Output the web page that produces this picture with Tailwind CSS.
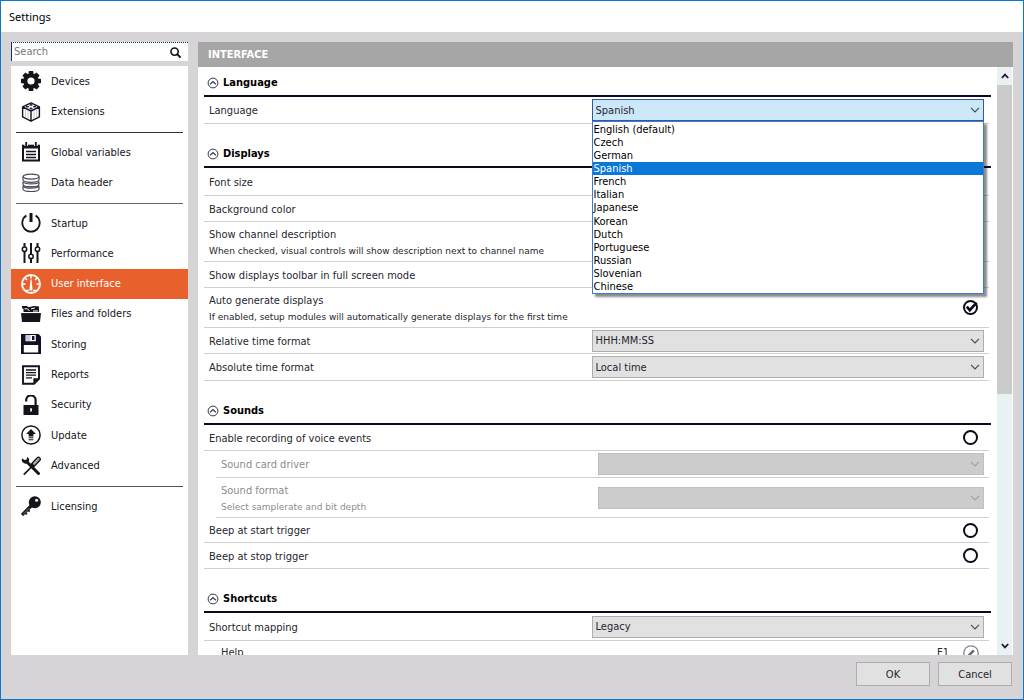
<!DOCTYPE html>
<html lang="en">
<head>
    <meta charset="UTF-8">
    <meta name="viewport" content="width=device-width, initial-scale=1.0">
    <title>Settings</title>
    <script src="https://cdn.jsdelivr.net/npm/@tailwindcss/browser@4"></script>
</head>
<body class="h-screen overflow-hidden flex flex-col border border-[#0a78d0] bg-[#d6d4d7] font-['DejaVu_Sans_Condensed','DejaVu_Sans',sans-serif] text-[11px] leading-[14px] text-[#26262e]">
    <!-- Icons and chevron shared by the page -->
    <svg class="hidden">
        <symbol id="chevron" viewBox="0 0 10 6"><path d="M1 .8l4 4 4-4" fill="none" stroke="currentColor" stroke-width="1.2"/></symbol>
        <symbol id="collapse" viewBox="0 0 12 12"><circle cx="6" cy="6" r="4.9" fill="none" stroke="currentColor"/><path d="M3.2 7.2L6 4.6l2.8 2.6" fill="none" stroke="currentColor" stroke-width="1.3"/></symbol>
    </svg>

    <header class="h-[31px] shrink-0 bg-white flex items-center px-2">
        <h1 class="font-['Noto_Sans',sans-serif] text-[11px] text-black">Settings</h1>
    </header>

    <div class="flex-1 min-h-0 flex gap-2.5 pt-2.5 pl-2.5 pr-2.5">
        <!-- Sidebar -->
        <aside class="w-[177px] shrink-0 flex flex-col gap-[5px]">
            <form class="h-[19px] shrink-0 flex items-center bg-white border-l border-t border-[#1b2a6b] [border-top-style:dotted]">
                <input type="search" aria-label="Search" placeholder="Search" class="flex-1 min-w-0 pl-0.5 outline-none placeholder:text-[#777]">
                <button type="submit" aria-label="Search" class="px-1.5">
                    <svg class="size-[13px]" viewBox="0 0 14 14" fill="none" stroke="#111" stroke-width="1.7"><circle cx="6" cy="6" r="3.9"/><path d="M8.8 8.8l3.7 3.7" stroke-width="2.1"/></svg>
                </button>
            </form>
            <nav class="flex-1 min-h-0 bg-white text-[#15151c]">
                <div class="h-[61px] flex flex-col">
                    <a href="#devices" class="flex-1 flex items-center gap-2.5 pl-2.5">
                        <svg class="size-5" viewBox="0 0 20 20"><g fill="#17131a"><circle cx="10" cy="10" r="7.4"/><g id="teeth"><path d="M7.9 0h4.2l.7 4H7.2zM7.9 20h4.2l.7-4H7.2z"/><path d="M0 7.9v4.2l4 .7V7.2zM20 7.9v4.2l-4 .7V7.2z"/></g><use href="#teeth" transform="rotate(45 10 10)"/></g><circle cx="10" cy="10" r="3.6" fill="#fff"/></svg>
                        <span class="pt-0.5">Devices</span>
                    </a>
                    <a href="#extensions" class="flex-1 flex items-center gap-2.5 pl-2.5">
                        <svg class="size-5" viewBox="0 0 20 20" fill="none" stroke="#17131a" stroke-width="1.4" stroke-linejoin="round"><path d="M10 .9l8.4 4v10L10 19.2l-8.4-4.3v-10zM1.6 4.9L10 9l8.4-4.1M10 9v10.2"/><path d="M4.5 7.5v8.2M7 9v8.2M13 9v8.2M15.7 7.5v8.2" stroke="#b9b9c0" stroke-width=".8"/><g fill="#17235c" stroke="none"><ellipse cx="10" cy="2.9" rx="1.6" ry=".9"/><ellipse cx="6.4" cy="4.7" rx="1.6" ry=".9"/><ellipse cx="13.6" cy="4.7" rx="1.6" ry=".9"/><ellipse cx="10" cy="6.5" rx="1.6" ry=".9"/></g></svg>
                        <span>Extensions</span>
                    </a>
                </div>
                <hr class="mx-[5px] mt-[5px] mb-1 border-[#333]">
                <div class="h-[61px] flex flex-col">
                    <a href="#variables" class="flex-1 flex items-center gap-2.5 pl-2.5">
                        <svg class="size-5" viewBox="0 0 20 20" fill="none" stroke="#17131a"><path d="M2 3.5v15h16v-15" stroke-width="2"/><path d="M1 4.6h18" stroke-width="3.8"/><path d="M5.2 0v4M14.8 0v4" stroke="#fff" stroke-width="3.6"/><path d="M5.2 0v4M14.8 0v4" stroke-width="1.8"/><path d="M5 9.5h10M5 12.5h10M5 15.5h10" stroke-width="1.3"/></svg>
                        <span class="pt-0.5">Global variables</span>
                    </a>
                    <a href="#header" class="flex-1 flex items-center gap-2.5 pl-2.5">
                        <svg class="size-5" viewBox="0 0 20 20" fill="none" stroke="#4c4b5c" stroke-width="1.2"><ellipse cx="10" cy="3.6" rx="8" ry="2.5"/><path d="M2 3.6v3.2c0 3.3 16 3.3 16 0V3.6M2 8.4v2.8c0 3.3 16 3.3 16 0V8.4c0 3.2-16 3.2-16 0zM2 12.8v3.2c0 3.3 16 3.3 16 0v-3.2c0 3.2-16 3.2-16 0z"/></svg>
                        <span>Data header</span>
                    </a>
                </div>
                <hr class="mx-[5px] mt-[5px] mb-1 border-[#666]">
                <div class="h-[273px] flex flex-col">
                    <a href="#startup" class="flex-1 flex items-center gap-2.5 pl-2.5">
                        <svg class="size-5" viewBox="0 0 20 20" fill="none" stroke="#17131a"><path d="M5.4 2.6a8.7 8.7 0 1 0 9.2 0" stroke-width="1.8"/><path d="M10 0v9" stroke-width="3"/></svg>
                        <span class="pt-0.5">Startup</span>
                    </a>
                    <a href="#performance" class="flex-1 flex items-center gap-2.5 pl-2.5">
                        <svg class="size-5" viewBox="0 0 20 20" fill="none" stroke="#17131a" stroke-width="2"><path d="M3.5 0v4M3.5 9v11M10 0v11M10 16v4M16.5 0v4M16.5 9v11"/><g fill="#fff" stroke-width="1.5"><circle cx="3.5" cy="6.2" r="2.2"/><circle cx="10" cy="13.4" r="2.2"/><circle cx="16.5" cy="6.2" r="2.2"/></g></svg>
                        <span class="pt-0.5">Performance</span>
                    </a>
                    <a href="#interface" aria-current="page" class="flex-1 flex items-center gap-2.5 pl-2.5 bg-[#e8602c] text-white">
                        <svg class="size-5" viewBox="0 0 20 20" fill="none" stroke="#fff"><circle cx="10" cy="10" r="9" stroke-width="1.9"/><path d="M10 1.5v3M1.5 10h3M15.5 10h3M4 4l2 2M16 4l-2 2" stroke-width="1.4"/><path d="M9.4 5.5h1.2l.9 9.8a1.5 1.5 0 0 1-3 0z" fill="#fff" stroke="none"/><path d="M4.6 16.4h3.2M12.2 16.4h3.2" stroke-width="1.4"/></svg>
                        <span>User interface</span>
                    </a>
                    <a href="#files" class="flex-1 flex items-center gap-2.5 pl-2.5">
                        <svg class="size-5" viewBox="0 0 20 20" fill="#17131a"><path d="M0 9h20l-1 9H1z"/><path d="M1 2h5l1.3 1.2L13 2l5 .5V8H2.5V5L1 4z"/><path d="M3.5 4.8h3l2 2.2M10 4.8l4-.8M12 7h5" stroke="#fff" fill="none"/><path d="M0 8.6h20" stroke="#fff" stroke-width=".7"/></svg>
                        <span>Files and folders</span>
                    </a>
                    <a href="#storing" class="flex-1 flex items-center gap-2.5 pl-2.5">
                        <svg class="size-5" viewBox="0 0 20 20"><path d="M0 0h17.5L20 2.5V20H0z" fill="#101024"/><path d="M4.5 1h10.3v6.3H4.5zM2.8 11h14.4v7.6H2.8z" fill="#fff"/><path d="M5 1h4.5v5.8H5z" fill="#c8c8d4"/><path d="M11 2h2.4v4H11z" fill="#101024"/></svg>
                        <span class="pt-0.5">Storing</span>
                    </a>
                    <a href="#reports" class="flex-1 flex items-center gap-2.5 pl-2.5">
                        <svg class="size-5" viewBox="0 0 20 20" fill="none" stroke="#17131a"><path d="M2 1.2h16v12.6L13 18.8H2z" stroke-width="1.9"/><path d="M18.6 13.2H12.4v6.2z" fill="#17131a" stroke="none"/><path d="M5 5h10M5 7.6h10M5 10.2h10M5 12.8h6" stroke-width="1.3"/></svg>
                        <span>Reports</span>
                    </a>
                    <a href="#security" class="flex-1 flex items-center gap-2.5 pl-2.5">
                        <svg class="size-5" viewBox="0 0 20 20"><path d="M5.2 6.4V5a4.7 4.7 0 0 1 9.4 0v6" fill="none" stroke="#17131a" stroke-width="2.2"/><path d="M2.5 10h15v10h-15z" fill="#17131a"/><path d="M9.2 13.2h1.7v3.4H9.2z" fill="#fff"/></svg>
                        <span>Security</span>
                    </a>
                    <a href="#update" class="flex-1 flex items-center gap-2.5 pl-2.5">
                        <svg class="size-5" viewBox="0 0 20 20"><circle cx="10" cy="10" r="9.1" fill="none" stroke="#17131a" stroke-width="1.5"/><path d="M10 4l5 5h-2.6v2.4H7.6V9H5zM7.6 12.2h4.8v1.1H7.6zM7.6 14.2h4.8v1.1H7.6z" fill="#17131a"/></svg>
                        <span class="pt-0.5">Update</span>
                    </a>
                    <a href="#advanced" class="flex-1 flex items-center gap-2.5 pl-2.5">
                        <svg class="size-5" viewBox="0 0 20 20" fill="none" stroke="#17131a"><path d="M5.5 5.5l12 12" stroke-width="3" stroke-linecap="round"/><path d="M1.2 2.4A3.6 3.6 0 1 0 6.4.9L5.4 3.7 3.6 4z" fill="#17131a" stroke="none"/><path d="M2.8 18.6l8.6-8.6" stroke-width="1.7"/><path d="M12.4 8.4l5-5.2" stroke-width="5" stroke-linecap="round"/><path d="M13.2 7.6l4.2-4.4" stroke="#aaa" stroke-width="2.4" stroke-linecap="round" stroke-dasharray="1 .8"/></svg>
                        <span>Advanced</span>
                    </a>
                </div>
                <hr class="mx-[5px] mt-[5px] mb-1 border-[#555]">
                <div class="h-[30px] flex flex-col">
                    <a href="#licensing" class="flex-1 flex items-center gap-2.5 pl-2.5">
                        <svg class="size-5" viewBox="0 0 20 20"><circle cx="13.8" cy="6.2" r="6" fill="#17131a"/><circle cx="15.6" cy="4.3" r="1.5" fill="#fff"/><path d="M10 10L1 19" stroke="#17131a" stroke-width="3.2"/><path d="M6.6 13.4l2 2.2M3.8 16.2l2 2.2" stroke="#17131a" stroke-width="1.8"/><path d="M8.3 12.2L2.2 18.3" stroke="#aaa" stroke-width=".7"/></svg>
                        <span class="pt-0.5">Licensing</span>
                    </a>
                </div>
            </nav>
        </aside>

        <!-- Interface page -->
        <main class="flex-1 min-w-0 flex flex-col">
            <h2 class="h-[25px] shrink-0 flex items-center px-2.5 bg-[#a6a6a6] text-white font-bold">INTERFACE</h2>
            <div class="flex-1 min-h-0 flex bg-white">
                <div class="flex-1 min-w-0 overflow-hidden pl-1.5 pr-1.5">
                    <section>
                        <h3 class="h-[30px] pt-1 flex items-center gap-1 pl-[3px] border-b-2 border-[#0b0b1c] text-black font-bold">
                            <svg class="size-3 text-[#333a4c]"><use href="#collapse"/></svg>Language
                        </h3>
                        <div class="h-[27px] mr-0.5 pl-[5px] pr-[5px] flex items-center justify-between border-b border-[#cfcfcf]">
                            <label for="language" class="pt-0.5">Language</label>
                            <div class="relative w-[calc(50%+5px)] h-[22px]">
                                <select id="language" class="appearance-none size-full pt-px pl-[3px] bg-[#cbe7f8] border border-[#33589e] outline-none">
                                    <option>Spanish</option>
                                </select>
                                <svg class="absolute right-1 top-2 w-2.5 h-1.5 text-[#444a66] pointer-events-none"><use href="#chevron"/></svg>
                                <!-- Open list of languages -->
                                <ul role="listbox" aria-label="Language" class="absolute z-10 top-full left-0 right-0 h-[173px] pt-px flex flex-col bg-white border border-[#3b7bd4] shadow-[3px_3px_2px_rgba(0,0,0,0.45)] leading-[13px] text-black">
                                    <li role="option" class="flex-1 pl-px">English (default)</li>
                                    <li role="option" class="flex-1 pl-px">Czech</li>
                                    <li role="option" class="flex-1 pl-px">German</li>
                                    <li role="option" aria-selected="true" class="flex-1 pl-px bg-[#0a78d7] text-white">Spanish</li>
                                    <li role="option" class="flex-1 pl-px">French</li>
                                    <li role="option" class="flex-1 pl-px">Italian</li>
                                    <li role="option" class="flex-1 pl-px">Japanese</li>
                                    <li role="option" class="flex-1 pl-px">Korean</li>
                                    <li role="option" class="flex-1 pl-px">Dutch</li>
                                    <li role="option" class="flex-1 pl-px">Portuguese</li>
                                    <li role="option" class="flex-1 pl-px">Russian</li>
                                    <li role="option" class="flex-1 pl-px">Slovenian</li>
                                    <li role="option" class="flex-1 pl-px">Chinese</li>
                                </ul>
                            </div>
                        </div>
                    </section>

                    <section>
                        <h3 class="h-11 pt-[18px] flex items-center gap-1 pl-[3px] border-b-2 border-[#0b0b1c] text-black font-bold">
                            <svg class="size-3 text-[#333a4c]"><use href="#collapse"/></svg>Displays
                        </h3>
                        <div class="h-7 mr-0.5 pl-[5px] pt-0.5 flex items-center border-b border-[#cfcfcf]">Font size</div>
                        <div class="h-[26px] mr-0.5 pl-[5px] pt-0.5 flex items-center border-b border-[#cfcfcf]">Background color</div>
                        <div class="h-10 mr-0.5 pl-[5px] pt-0.5 flex flex-col justify-center gap-0.5 border-b border-[#cfcfcf]">
                            <p>Show channel description</p>
                            <p class="font-['DejaVu_Sans',sans-serif] text-[9px]">When checked, visual controls will show description next to channel name</p>
                        </div>
                        <div class="h-[26px] mr-0.5 pl-[5px] pt-0.5 flex items-center border-b border-[#cfcfcf]">Show displays toolbar in full screen mode</div>
                        <div class="h-10 mr-0.5 pl-[5px] pr-[11px] flex items-center justify-between border-b border-[#cfcfcf]">
                            <div class="pt-0.5 flex flex-col gap-0.5">
                                <label for="autogen">Auto generate displays</label>
                                <p class="font-['DejaVu_Sans',sans-serif] text-[9px]">If enabled, setup modules will automatically generate displays for the first time</p>
                            </div>
                            <div class="relative size-[15px]">
                                <input type="checkbox" id="autogen" checked class="peer appearance-none block size-[15px] rounded-full border-2 border-[#0b0b1c]">
                                <svg class="absolute inset-0 size-[15px] hidden peer-checked:block pointer-events-none" viewBox="0 0 15 15"><path d="M3.8 6.6l3 3.6L13.6 2.6" fill="none" stroke="#0b0b1c" stroke-width="2.6"/></svg>
                            </div>
                        </div>
                        <div class="h-[26px] mr-0.5 pl-[5px] pr-[5px] flex items-center justify-between border-b border-[#cfcfcf]">
                            <label for="reltime" class="pt-0.5">Relative time format</label>
                            <div class="relative w-[calc(50%+5px)] h-[22px]">
                                <select id="reltime" class="appearance-none size-full pt-px pl-[3px] bg-[#e1e1e1] border border-[#adadad]"><option>HHH:MM:SS</option></select>
                                <svg class="absolute right-1 top-2 w-2.5 h-1.5 text-[#444a66] pointer-events-none"><use href="#chevron"/></svg>
                            </div>
                        </div>
                        <div class="h-[27px] mr-0.5 pl-[5px] pr-[5px] flex items-center justify-between border-b border-[#cfcfcf]">
                            <label for="abstime" class="pt-0.5">Absolute time format</label>
                            <div class="relative w-[calc(50%+5px)] h-[22px]">
                                <select id="abstime" class="appearance-none size-full pt-px pl-[3px] bg-[#e1e1e1] border border-[#adadad]"><option>Local time</option></select>
                                <svg class="absolute right-1 top-2 w-2.5 h-1.5 text-[#444a66] pointer-events-none"><use href="#chevron"/></svg>
                            </div>
                        </div>
                    </section>

                    <section>
                        <h3 class="h-11 pt-[18px] flex items-center gap-1 pl-[3px] border-b-2 border-[#0b0b1c] text-black font-bold">
                            <svg class="size-3 text-[#333a4c]"><use href="#collapse"/></svg>Sounds
                        </h3>
                        <div class="h-[26px] mr-0.5 pl-[5px] pr-[11px] flex items-center justify-between border-b border-[#cfcfcf]">
                            <label for="voice" class="pt-0.5">Enable recording of voice events</label>
                            <input type="checkbox" id="voice" class="appearance-none size-[15px] rounded-full border-2 border-[#0b0b1c]">
                        </div>
                        <div class="h-[27px] ml-3 mr-0.5 pl-[5px] pr-[5px] flex items-center justify-between border-b border-[#cfcfcf] text-[#8c8c8c]">
                            <label for="driver" class="pt-0.5">Sound card driver</label>
                            <div class="relative w-[calc(50%+5px)] h-[22px]">
                                <select id="driver" disabled class="appearance-none size-full bg-[#cccccc] border border-dotted border-[#b5b5b5]"><option></option></select>
                                <svg class="absolute right-1 top-2 w-2.5 h-1.5 text-[#a3a3a3] pointer-events-none"><use href="#chevron"/></svg>
                            </div>
                        </div>
                        <div class="h-10 ml-3 mr-0.5 pl-[5px] pr-[5px] flex items-center justify-between border-b border-[#cfcfcf] text-[#8c8c8c]">
                            <div class="pt-0.5 flex flex-col gap-0.5">
                                <label for="format">Sound format</label>
                                <p class="font-['DejaVu_Sans',sans-serif] text-[9px]">Select samplerate and bit depth</p>
                            </div>
                            <div class="relative w-[calc(50%+5px)] h-[22px]">
                                <select id="format" disabled class="appearance-none size-full bg-[#cccccc] border border-dotted border-[#b5b5b5]"><option></option></select>
                                <svg class="absolute right-1 top-2 w-2.5 h-1.5 text-[#a3a3a3] pointer-events-none"><use href="#chevron"/></svg>
                            </div>
                        </div>
                        <div class="h-[25px] mr-0.5 pl-[5px] pr-[11px] flex items-center justify-between border-b border-[#cfcfcf]">
                            <label for="beepstart" class="pt-0.5">Beep at start trigger</label>
                            <input type="checkbox" id="beepstart" class="appearance-none size-[15px] rounded-full border-2 border-[#0b0b1c]">
                        </div>
                        <div class="h-[26px] mr-0.5 pl-[5px] pr-[11px] flex items-center justify-between border-b border-[#cfcfcf]">
                            <label for="beepstop" class="pt-0.5">Beep at stop trigger</label>
                            <input type="checkbox" id="beepstop" class="appearance-none size-[15px] rounded-full border-2 border-[#0b0b1c]">
                        </div>
                    </section>

                    <section>
                        <h3 class="h-11 pt-[18px] flex items-center gap-1 pl-[3px] border-b-2 border-[#0b0b1c] text-black font-bold">
                            <svg class="size-3 text-[#333a4c]"><use href="#collapse"/></svg>Shortcuts
                        </h3>
                        <div class="h-7 mr-0.5 pl-[5px] pr-[5px] flex items-center justify-between border-b border-[#cfcfcf]">
                            <label for="mapping" class="pt-0.5">Shortcut mapping</label>
                            <div class="relative w-[calc(50%+5px)] h-[22px]">
                                <select id="mapping" class="appearance-none size-full pt-px pl-[3px] bg-[#e1e1e1] border border-[#adadad]"><option>Legacy</option></select>
                                <svg class="absolute right-1 top-2 w-2.5 h-1.5 text-[#444a66] pointer-events-none"><use href="#chevron"/></svg>
                            </div>
                        </div>
                        <div class="h-6 ml-3 mr-0.5 pl-[5px] pr-2.5 flex items-center">
                            <span class="flex-1">Help</span>
                            <span class="pr-3.5">F1</span>
                            <button aria-label="Edit shortcut">
                                <svg class="size-4 block" viewBox="0 0 16 16"><circle cx="8" cy="8" r="7.2" fill="none" stroke="#85858c" stroke-width="1.3"/><path d="M4.4 11.8l.6-2.4 4.9-5 1.9 1.9-4.9 4.9z" fill="#6b6b78"/></svg>
                            </button>
                        </div>
                    </section>
                </div>

                <!-- Scrollbar -->
                <div class="w-4 shrink-0 flex flex-col bg-[#e9f2f2] border-r border-white text-[#2a1238]">
                    <button aria-label="Scroll up" class="h-[18px] flex items-center justify-center"><svg class="w-2 h-1.5" viewBox="0 0 8 6"><path d="M.8 5L4 1.6 7.2 5" fill="none" stroke="currentColor" stroke-width="1.8"/></svg></button>
                    <div class="flex-1 min-h-0"><div class="bg-[#cbcbcb]" style="height: 56%"></div></div>
                    <button aria-label="Scroll down" class="h-[18px] flex items-center justify-center"><svg class="w-2 h-1.5" viewBox="0 0 8 6"><path d="M.8 1L4 4.4 7.2 1" fill="none" stroke="currentColor" stroke-width="1.8"/></svg></button>
                </div>
            </div>
        </main>
    </div>

    <footer class="h-11 shrink-0 flex justify-end items-start gap-2 pt-[7px] pr-[11px]">
        <button class="w-[74px] h-6 pt-px bg-[#e1e1e1] border border-[#adadad]">OK</button>
        <button class="w-[74px] h-6 pt-px bg-[#e1e1e1] border border-[#adadad]">Cancel</button>
    </footer>
</body>
</html>
